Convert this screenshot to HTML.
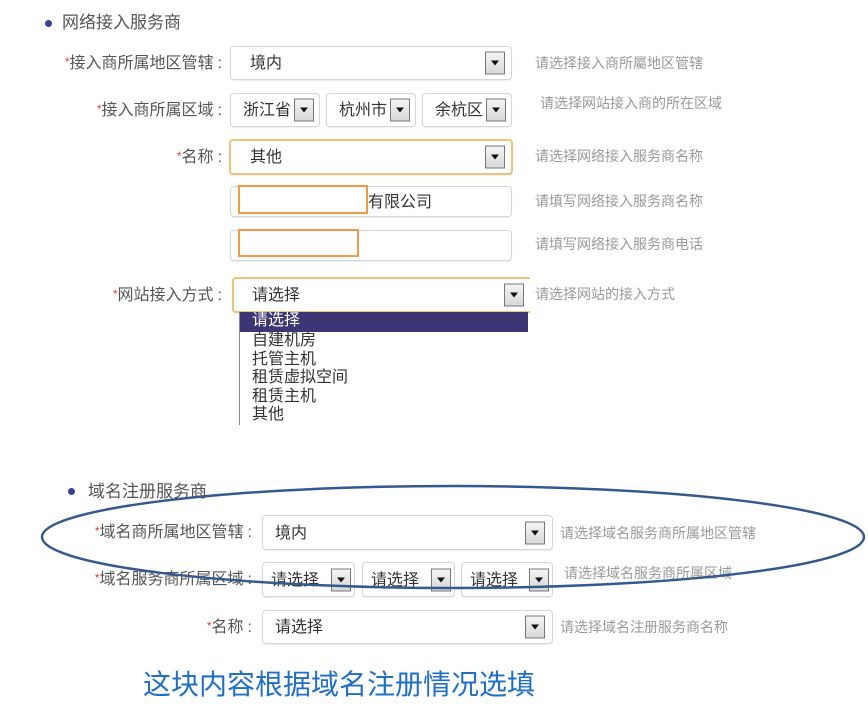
<!DOCTYPE html>
<html><head><meta charset="utf-8"><style>
*{margin:0;padding:0;box-sizing:border-box}
body{width:868px;height:712px;background:#fff;position:relative;overflow:hidden;font-family:"Liberation Sans","Noto Sans CJK SC",sans-serif}
.a{position:absolute;white-space:nowrap}
.t{font-size:17px;color:#555;line-height:20px}
.dot{position:absolute;width:7px;height:7px;border-radius:50%;background:#3a3f9a}
.lb{font-size:16px;color:#555;line-height:20px;text-align:right}
.lb b{color:#e33;font-weight:normal;font-size:12px;vertical-align:2px}
.lb i{font-style:normal;margin-left:4px;margin-right:2px}
.box{position:absolute;border:1px solid #d6d6d6;border-radius:4px;background:#fff;box-shadow:0 1px 1px rgba(0,0,0,.08)}
.box.o{border:2px solid #eec27a}
.box span{position:absolute;left:12px;top:50%;transform:translateY(-45%);font-size:16px;color:#333;line-height:20px}
.arr{position:absolute;right:6px;top:50%;transform:translateY(-50%);width:20px;height:23px;border:1px solid #777;background:linear-gradient(#f4f4f4,#d8d8d8)}
.arr:after{content:"";position:absolute;left:5px;top:8px;border-left:4.5px solid transparent;border-right:4.5px solid transparent;border-top:5px solid #111}
.h{font-size:14px;color:#999;line-height:16px}
.or{position:absolute;border:2px solid #f29a45}
.dd{position:absolute;left:239px;top:312px;width:289px;height:113px;border-left:1px solid #888}
.dd div{font-size:16px;line-height:18.6px;color:#333;padding-left:12px;height:18.6px}
.dd div.s{background:#3c3675;color:#fff;height:20px}
</style></head><body>
<div class="dot" style="left:45px;top:20px"></div>
<div class="a t" style="left:62px;top:13px">网络接入服务商</div>

<div class="a lb" style="right:644px;top:52px"><b>*</b>接入商所属地区管辖<i>:</i></div>
<div class="box" style="left:230px;top:46px;width:282px;height:34px"><span style="left:19px">境内</span><div class="arr"></div></div>
<div class="a h" style="left:535px;top:55px">请选择接入商所屬地区管辖</div>

<div class="a lb" style="right:644px;top:99px"><b>*</b>接入商所属区域<i>:</i></div>
<div class="box" style="left:230px;top:93px;width:90px;height:34px"><span style="left:12px">浙江省</span><div class="arr" style="right:5px"></div></div>
<div class="box" style="left:326px;top:93px;width:90px;height:34px"><span style="left:12px">杭州市</span><div class="arr" style="right:5px"></div></div>
<div class="box" style="left:422px;top:93px;width:90px;height:34px"><span style="left:12px">余杭区</span><div class="arr" style="right:5px"></div></div>
<div class="a h" style="left:540px;top:95px">请选择网站接入商的所在区域</div>

<div class="a lb" style="right:644px;top:146px"><b>*</b>名称<i>:</i></div>
<div class="box o" style="left:229px;top:139px;width:284px;height:36px"><span style="left:19px">其他</span><div class="arr"></div></div>
<div class="a h" style="left:535px;top:148px">请选择网络接入服务商名称</div>

<div class="box" style="left:230px;top:186px;width:282px;height:31px"><span style="left:137px">有限公司</span></div>
<div class="or" style="left:238px;top:185px;width:130px;height:29px"></div>
<div class="a h" style="left:535px;top:193px">请填写网络接入服务商名称</div>

<div class="box" style="left:230px;top:230px;width:282px;height:31px"></div>
<div class="or" style="left:238px;top:229px;width:121px;height:28px"></div>
<div class="a h" style="left:535px;top:236px">请填写网络接入服务商电话</div>

<div class="a lb" style="right:644px;top:284px"><b>*</b>网站接入方式<i>:</i></div>
<div class="box o" style="left:232px;top:277px;width:298px;height:36px;border-right:none;border-radius:4px 0 0 4px"><span style="left:18px">请选择</span><div class="arr" style="right:6px"></div></div>
<div class="a h" style="left:535px;top:286px">请选择网站的接入方式</div>
<div class="dd"><div class="s">请选择</div><div>自建机房</div><div>托管主机</div><div>租赁虚拟空间</div><div>租赁主机</div><div>其他</div></div>

<div class="dot" style="left:68px;top:488px"></div>
<div class="a t" style="left:88px;top:482px">域名注册服务商</div>

<div class="a lb" style="right:614px;top:521px"><b>*</b>域名商所属地区管辖<i>:</i></div>
<div class="box" style="left:262px;top:515px;width:291px;height:35px"><span>境内</span><div class="arr" style="right:7px"></div></div>
<div class="a h" style="left:560px;top:525px">请选择域名服务商所属地区管辖</div>

<div class="a lb" style="right:614px;top:568px"><b>*</b>域名服务商所属区域<i>:</i></div>
<div class="box" style="left:262px;top:562px;width:93px;height:35px"><span style="left:8px">请选择</span><div class="arr" style="right:3px"></div></div>
<div class="box" style="left:362px;top:562px;width:93px;height:35px"><span style="left:8px">请选择</span><div class="arr" style="right:3px"></div></div>
<div class="box" style="left:461px;top:562px;width:92px;height:35px"><span style="left:8px">请选择</span><div class="arr" style="right:3px"></div></div>
<div class="a h" style="left:564px;top:565px">请选择域名服务商所属区域</div>

<div class="a lb" style="right:614px;top:616px"><b>*</b>名称<i>:</i></div>
<div class="box" style="left:262px;top:610px;width:291px;height:34px"><span>请选择</span><div class="arr" style="right:7px"></div></div>
<div class="a h" style="left:560px;top:619px">请选择域名注册服务商名称</div>

<div class="a" style="left:143px;top:668px;font-size:28px;line-height:34px;color:#1f6fc2">这块内容根据域名注册情况选填</div>

<svg class="a" style="left:0;top:0" width="868" height="712"><ellipse cx="453" cy="537" rx="411" ry="51" fill="none" stroke="#34598c" stroke-width="2.5"/></svg>
</body></html>
